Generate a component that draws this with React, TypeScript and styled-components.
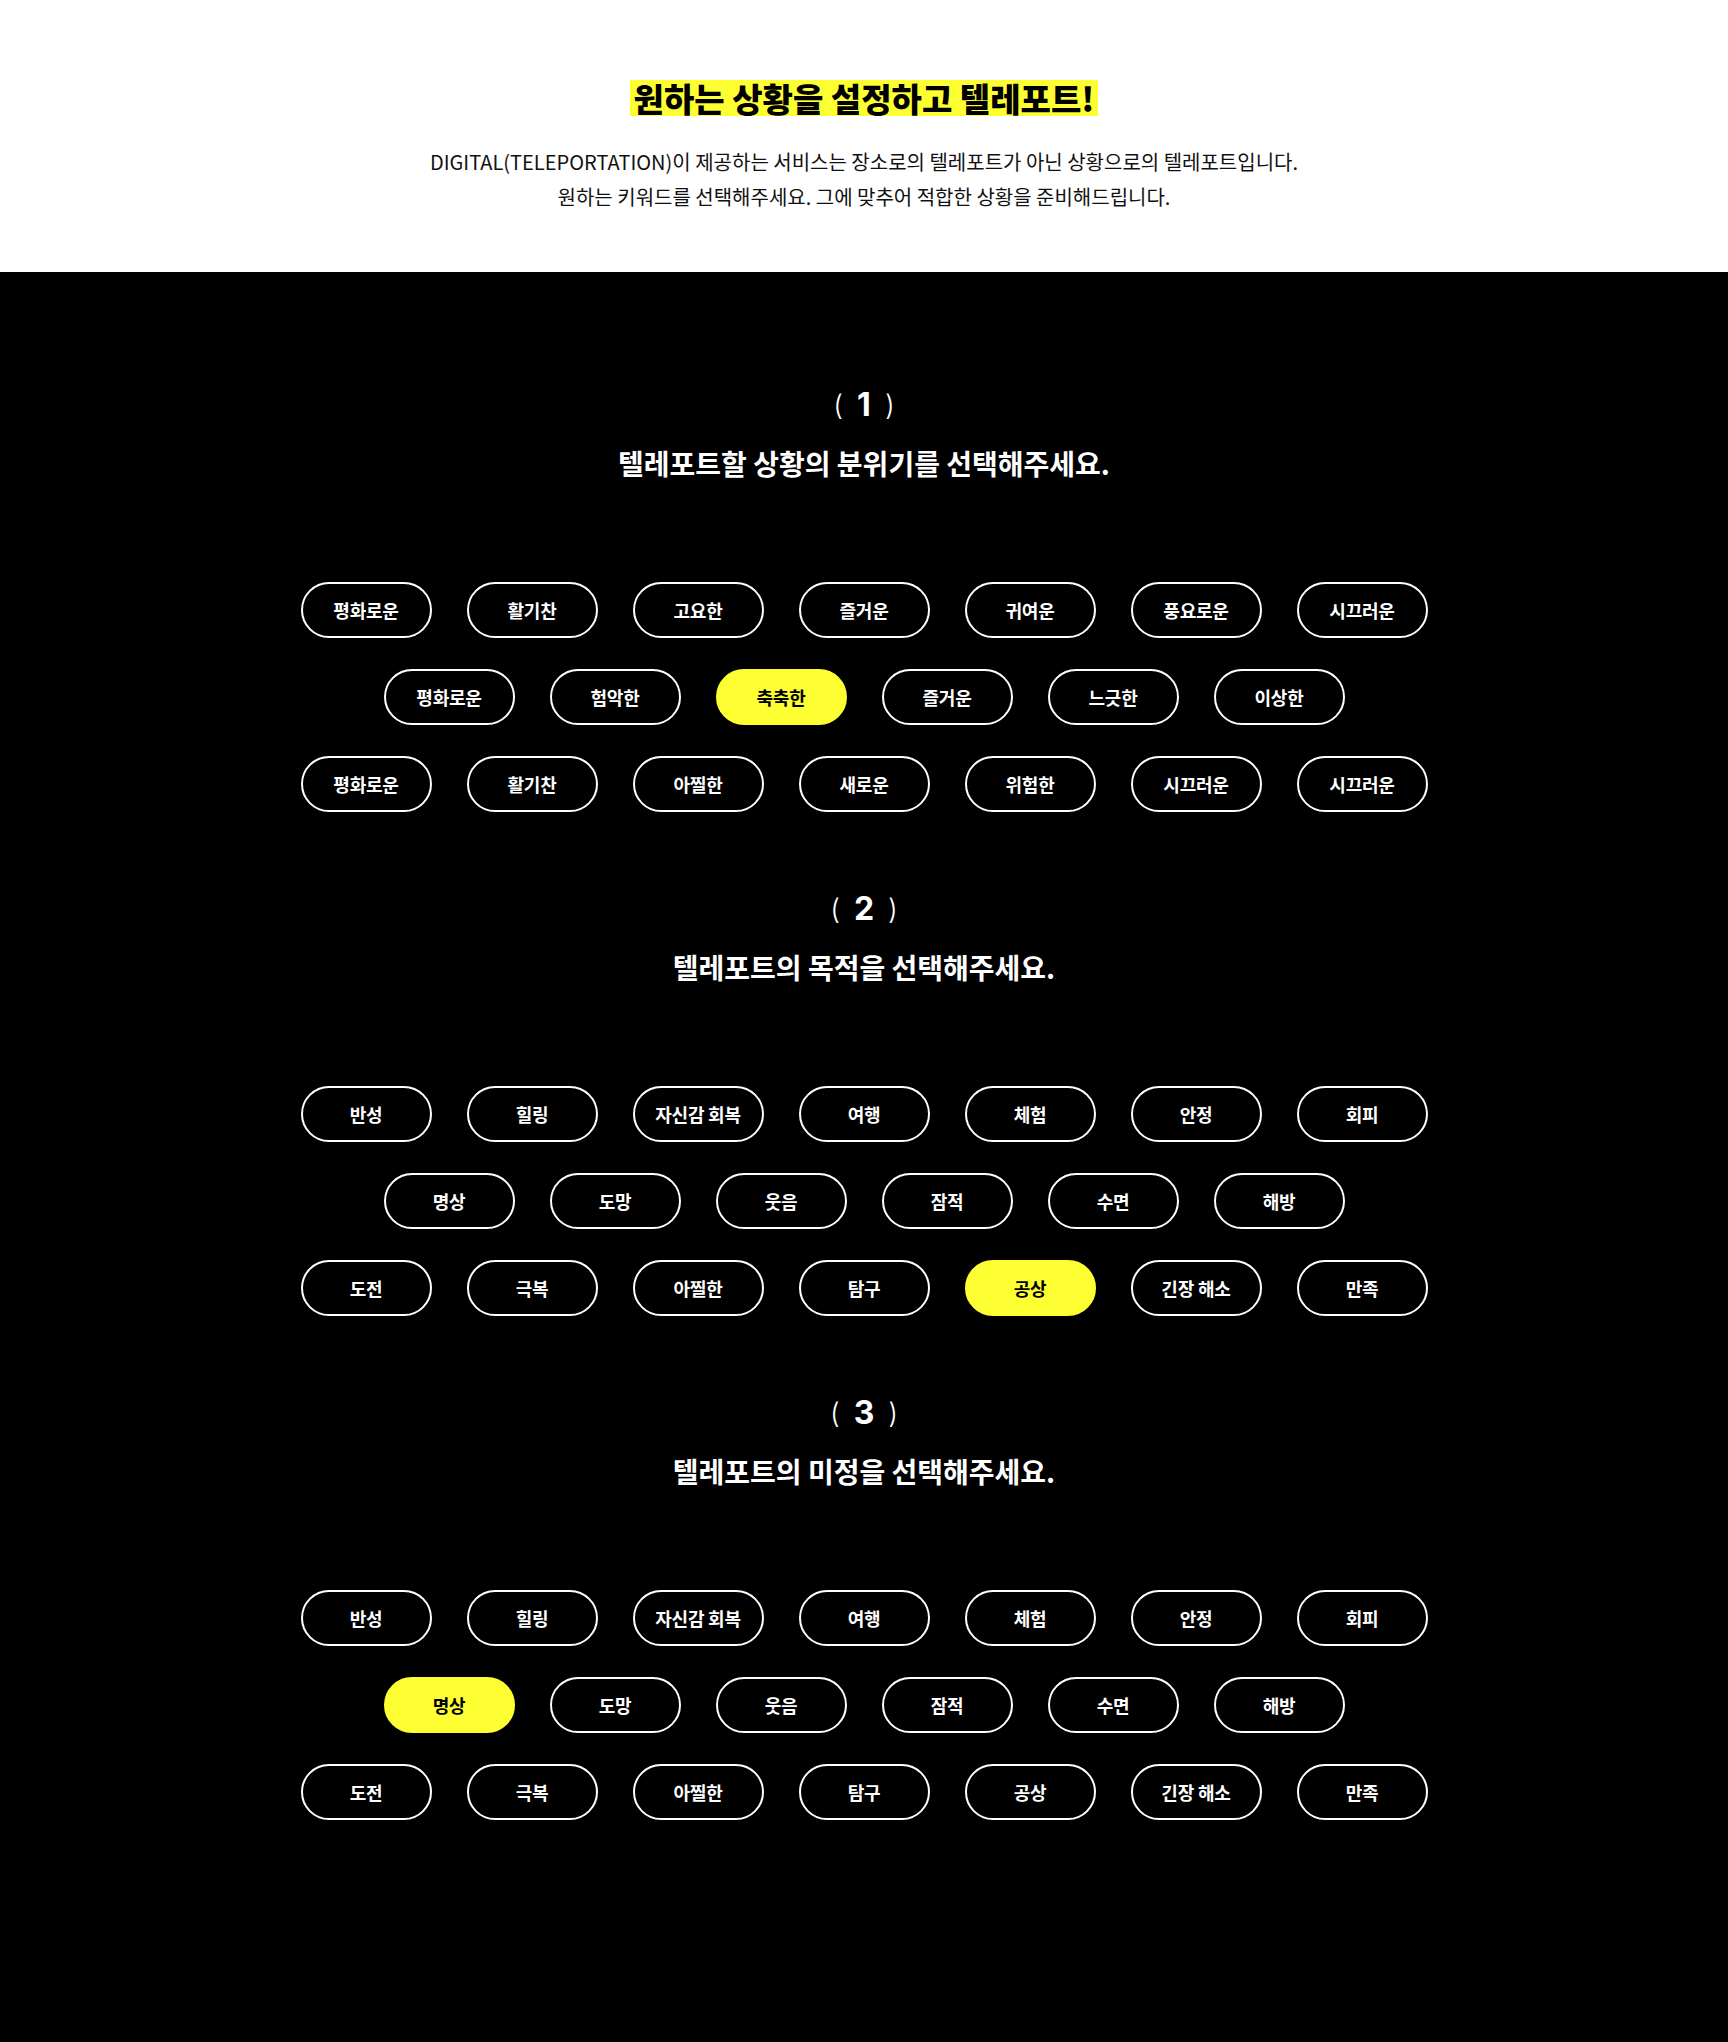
import React from "react";
import styled, { createGlobalStyle } from "styled-components";

const GlobalStyle = createGlobalStyle`
  * { box-sizing: border-box; }
  html, body { margin: 0; padding: 0; background: #000; }
  body {
    font-family: "Noto Sans CJK KR", "Noto Sans", sans-serif;
    -webkit-font-smoothing: antialiased;
  }
`;

const YELLOW = "#fdff32";

const Page = styled.div`
  width: 1728px;
  min-height: 2042px;
  display: flex;
  flex-direction: column;
`;

const Header = styled.header`
  background: #fff;
  height: 272px;
  padding-top: 80px;
  display: flex;
  flex-direction: column;
  align-items: center;
`;

const Headline = styled.h1`
  margin: 0;
  background: ${YELLOW};
  color: #000;
  font-size: 33px;
  font-weight: 900;
  line-height: 36px;
  height: 36px;
  padding: 0 4px;
`;

const Intro = styled.p`
  margin: 28px 0 0;
  color: #111;
  font-size: 20px;
  font-weight: 400;
  line-height: 35px;
  text-align: center;
`;

const Main = styled.main`
  flex: 1;
  background: #000;
  padding: 113px 0 218px;
  display: flex;
  flex-direction: column;
  align-items: center;
  gap: 77px;
`;

const Section = styled.section`
  display: flex;
  flex-direction: column;
  align-items: center;
`;

const StepNo = styled.div`
  color: #fff;
  font-family: "Inter", "Noto Sans CJK KR", sans-serif;
  font-size: 32px;
  line-height: 40px;
  height: 40px;
  display: flex;
  align-items: center;
  gap: 14px;
`;

const Paren = styled.span`
  font-weight: 300;
  font-size: 28px;
`;

const Num = styled.span`
  font-weight: 700;
`;

const StepTitle = styled.h2`
  margin: 20px 0 0;
  color: #fff;
  font-size: 28px;
  font-weight: 700;
  line-height: 36px;
`;

const Rows = styled.div`
  margin-top: 101px;
  display: flex;
  flex-direction: column;
  align-items: center;
  gap: 31px;
`;

const Row = styled.div`
  display: flex;
  gap: 35px;
`;

const Pill = styled.button<{ $active?: boolean }>`
  width: 131px;
  height: 56px;
  border-radius: 28px;
  border: 2px solid ${(p) => (p.$active ? YELLOW : "#fff")};
  background: ${(p) => (p.$active ? YELLOW : "#000")};
  color: ${(p) => (p.$active ? "#000" : "#fff")};
  font-family: "Noto Sans CJK KR", sans-serif;
  font-size: 18px;
  font-weight: 700;
  letter-spacing: -0.2px;
  display: flex;
  align-items: center;
  justify-content: center;
  padding: 0;
  cursor: pointer;
`;

type SectionData = {
  no: number;
  title: string;
  rows: string[][];
  active: [number, number];
};

const purpose = [
  ["반성", "힐링", "자신감 회복", "여행", "체험", "안정", "회피"],
  ["명상", "도망", "웃음", "잠적", "수면", "해방"],
  ["도전", "극복", "아찔한", "탐구", "공상", "긴장 해소", "만족"],
];

const sections: SectionData[] = [
  {
    no: 1,
    title: "텔레포트할 상황의 분위기를 선택해주세요.",
    rows: [
      ["평화로운", "활기찬", "고요한", "즐거운", "귀여운", "풍요로운", "시끄러운"],
      ["평화로운", "험악한", "축축한", "즐거운", "느긋한", "이상한"],
      ["평화로운", "활기찬", "아찔한", "새로운", "위험한", "시끄러운", "시끄러운"],
    ],
    active: [1, 2],
  },
  {
    no: 2,
    title: "텔레포트의 목적을 선택해주세요.",
    rows: purpose,
    active: [2, 4],
  },
  {
    no: 3,
    title: "텔레포트의 미정을 선택해주세요.",
    rows: purpose,
    active: [1, 0],
  },
];

export default function App() {
  return (
    <>
      <GlobalStyle />
      <Page>
        <Header>
          <Headline>원하는 상황을 설정하고 텔레포트!</Headline>
          <Intro>
            DIGITAL(TELEPORTATION)이 제공하는 서비스는 장소로의 텔레포트가 아닌 상황으로의 텔레포트입니다.
            <br />
            원하는 키워드를 선택해주세요. 그에 맞추어 적합한 상황을 준비해드립니다.
          </Intro>
        </Header>
        <Main>
          {sections.map((s) => (
            <Section key={s.no}>
              <StepNo>
                <Paren>(</Paren>
                <Num>{s.no}</Num>
                <Paren>)</Paren>
              </StepNo>
              <StepTitle>{s.title}</StepTitle>
              <Rows>
                {s.rows.map((row, ri) => (
                  <Row key={ri}>
                    {row.map((label, ci) => (
                      <Pill
                        key={ci}
                        $active={s.active[0] === ri && s.active[1] === ci}
                      >
                        {label}
                      </Pill>
                    ))}
                  </Row>
                ))}
              </Rows>
            </Section>
          ))}
        </Main>
      </Page>
    </>
  );
}
